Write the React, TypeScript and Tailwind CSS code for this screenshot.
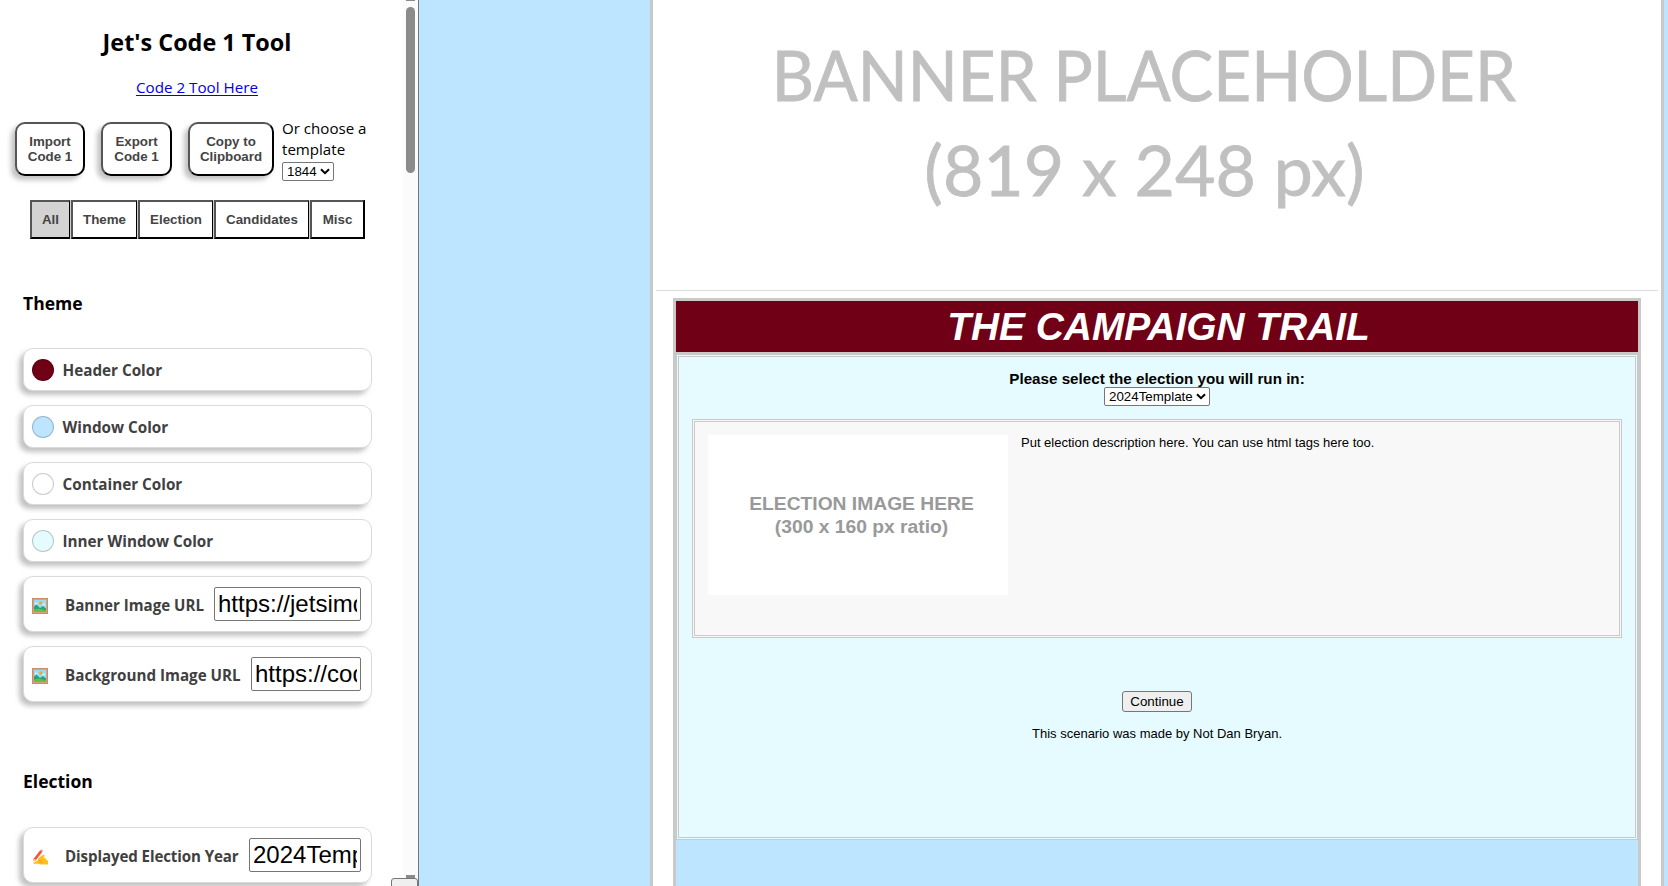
import type { ReactNode } from "react";

const segoe = "font-['Open_Sans','Noto_Sans',sans-serif]";
const arial = "font-['Liberation_Sans',Arial,sans-serif]";

function Chevron() {
  return (
    <svg width="10" height="7" viewBox="0 0 10 7" fill="none" className="shrink-0">
      <path d="M1 1.2 L5 5.2 L9 1.2" stroke="#000" strokeWidth="2" />
    </svg>
  );
}

function Select({ label, className }: { label: string; className: string }) {
  return (
    <div
      className={`flex h-[19px] items-center justify-between rounded-[2px] border border-[#767676] bg-white pl-[4px] pr-[3px] text-[13.33px] leading-none text-black ${arial} ${className}`}
    >
      <span>{label}</span>
      <Chevron />
    </div>
  );
}

function ActionButton({ lines, className }: { lines: [string, string]; className: string }) {
  return (
    <button
      className={`h-[54px] rounded-[10px] border-2 border-b-black border-l-[#555] border-r-black border-t-[#555] bg-white text-center text-[13.33px] font-bold leading-[15px] text-[#444] shadow-[-4px_4px_5px_rgba(0,0,0,0.24)] ${arial} ${className}`}
    >
      {lines[0]}
      <br />
      {lines[1]}
    </button>
  );
}

function Tab({ label, className }: { label: string; className: string }) {
  return (
    <button
      className={`h-[39px] border-b-2 border-l-2 border-r border-t-2 border-b-black border-l-[#555] border-r-black border-t-[#555] text-[13.33px] font-bold leading-none text-[#444] ${arial} ${className}`}
    >
      {label}
    </button>
  );
}

function Card({ children, className }: { children: ReactNode; className: string }) {
  return (
    <div
      className={`flex w-[349px] items-center rounded-[10px] border border-[#dadada] bg-white shadow-[-4px_4px_5px_rgba(0,0,0,0.24)] ${className}`}
    >
      {children}
    </div>
  );
}

function ColorRow({ label, swatch }: { label: string; swatch: string }) {
  return (
    <Card className="h-[43px] pl-[8px]">
      <span className={`size-[22px] rounded-full border border-black/20 ${swatch}`} />
      <span className="ml-[8.5px] text-[15.25px] font-bold leading-[22px] text-[#404040]">{label}</span>
    </Card>
  );
}

function FieldRow({
  icon,
  label,
  value,
  labelClass,
  fieldClass,
}: {
  icon: ReactNode;
  label: string;
  value: string;
  labelClass: string;
  fieldClass: string;
}) {
  return (
    <Card className="h-[56px] pl-[8px] pr-[10px]">
      <span className="mt-[3px] flex size-[16px] shrink-0 items-center justify-center">{icon}</span>
      <span
        className={`ml-[17px] mt-[1px] shrink-0 whitespace-nowrap font-bold leading-[22px] text-[#404040] ${labelClass}`}
      >
        {label}
      </span>
      <div className={`ml-auto shrink-0 rounded-[2px] border border-[#767676] bg-white px-[3px] ${fieldClass}`}>
        <div className={`h-[32px] overflow-hidden whitespace-nowrap text-[24px] leading-[31px] text-black ${arial}`}>
          {value}
        </div>
      </div>
    </Card>
  );
}

function PictureIcon() {
  return (
    <svg width="16" height="16" viewBox="0 0 16 16">
      <rect width="16" height="16" fill="#c98d6b" />
      <rect x="1" y="1" width="14" height="14" fill="#e0a27c" />
      <rect x="2" y="2" width="12" height="12" fill="#97dcf5" />
      <path d="M3 5.5h2.4M10.5 6.5h2.5" stroke="#e3f6fd" strokeWidth="1.4" />
      <circle cx="8.7" cy="4.9" r="1.6" fill="#f8a61c" />
      <path d="M2 8.5 L4.5 6.5 L8 10 L11 8 L14 10.5 V14 H2Z" fill="#2ba07c" />
      <path d="M2 11.5 Q7 9.5 14 12.5 V14 H2Z" fill="#5cc63c" />
    </svg>
  );
}

function WritingIcon() {
  return (
    <svg width="16" height="16" viewBox="0 0 16 16">
      <path
        d="M1.2 14.8 Q0.6 13.4 2.6 13 L5.4 11.4 Q6.2 8.2 8.6 7.4 L11.6 5.4 Q13 5.4 12.6 7 L11.6 8.4 Q13.4 8.8 14.4 10.6 L16 12 V15.6 H9.4 Q7.6 15.6 6.6 14.8 Z"
        fill="#fcc21b"
      />
      <path d="M7 11.6 H10.2 M7.6 13.4 H10.4" stroke="#f09a1a" strokeWidth="0.8" strokeLinecap="round" />
      <path d="M8.2 1.2 L10.4 2.8 L4 11 L1.4 12.2 L1.8 9.4 Z" fill="#f4553a" />
      <path d="M1.8 9.4 L4 11 L1.4 12.2 Z" fill="#f7c59a" />
      <path d="M8.2 1.2 Q9 0 10.2 0.8 Q11.2 1.6 10.4 2.8 Z" fill="#f9829b" />
    </svg>
  );
}

function Sidebar() {
  return (
    <aside
      className={`relative h-full w-[419px] shrink-0 overflow-hidden border-r border-[#767676] bg-white text-black ${segoe}`}
    >
      <div className="flex w-[394px] flex-col">
        <h1 className="mt-[26px] text-center text-[23.4px] font-bold leading-[32px]">Jet's Code 1 Tool</h1>
        <a className="mt-[18px] text-center text-[15.2px] leading-[22px] text-[#0000ee] underline underline-offset-2">
          Code 2 Tool Here
        </a>
        <div className="mt-[20px] flex h-[82px] items-start pl-[15px]">
          <ActionButton lines={["Import", "Code 1"]} className="mt-[4px] w-[70px]" />
          <ActionButton lines={["Export", "Code 1"]} className="ml-[16px] mt-[4px] w-[71px]" />
          <ActionButton lines={["Copy to", "Clipboard"]} className="ml-[16px] mt-[4px] w-[86px]" />
          <div className="ml-[8px] text-[15.1px] leading-[21px]">
            Or choose a
            <br />
            template
            <Select label="1844" className="mt-[2px] w-[52px]" />
          </div>
        </div>
        <div className="ml-[30px] flex w-[335px] gap-px border-r border-black bg-[#cfcfcf]">
          <Tab label="All" className="w-[40px] bg-[#d3d3d3]" />
          <Tab label="Theme" className="w-[66px] bg-white" />
          <Tab label="Election" className="w-[75px] bg-white" />
          <Tab label="Candidates" className="w-[95px] bg-white" />
          <Tab label="Misc" className="w-[54px] bg-white" />
        </div>
        <section className="mt-[52px] pl-[23px]">
          <h2 className="text-[17.5px] font-bold leading-[24px]">Theme</h2>
          <div className="mt-[33px] flex flex-col gap-[14px]">
            <ColorRow label="Header Color" swatch="bg-[#700016]" />
            <ColorRow label="Window Color" swatch="bg-[#bde5ff]" />
            <ColorRow label="Container Color" swatch="bg-white" />
            <ColorRow label="Inner Window Color" swatch="bg-[#e6fbff]" />
            <FieldRow
              icon={<PictureIcon />}
              label="Banner Image URL"
              value="https://jetsimdev.com/banner.png"
              labelClass="text-[15.1px]"
              fieldClass="w-[147px]"
            />
            <FieldRow
              icon={<PictureIcon />}
              label="Background Image URL"
              value="https://codeone.com/background.png"
              labelClass="text-[15.2px]"
              fieldClass="w-[110px]"
            />
          </div>
        </section>
        <section className="mt-[67px] pl-[23px]">
          <h2 className="text-[17.5px] font-bold leading-[24px]">Election</h2>
          <div className="mt-[34px]">
            <FieldRow
              icon={<WritingIcon />}
              label="Displayed Election Year"
              value="2024Template"
              labelClass="text-[15.1px] tracking-[-0.1px]"
              fieldClass="w-[112px]"
            />
          </div>
        </section>
      </div>
      <div className="absolute right-0 top-0 flex h-full w-[15px] flex-col items-center bg-[#fbfbfb]">
        <div className="h-px w-[9px] bg-[#8b8b8b]" />
        <div className="mt-[6px] h-[166px] w-[9px] rounded-full bg-[#8b8b8b]" />
        <div className="mt-auto h-[11px] w-[9px] bg-[#8b8b8b]" />
      </div>
      <div className="absolute -bottom-[10px] right-0 h-[18px] w-[27px] rounded-[3px] border border-[#767676] bg-[#efefef]" />
    </aside>
  );
}

function Game() {
  return (
    <main className={`flex h-full min-w-0 flex-1 justify-end bg-[#bde5ff] pr-[4px] text-black ${arial}`}>
      <div className="flex h-full w-[1014px] flex-col border-x-[3px] border-[#c9c9c9] bg-white px-[3px]">
        <div className="flex h-[291px] shrink-0 flex-col items-center border-b border-[#dcdcdc] pt-[27px] font-['Lato','Carlito',sans-serif] text-[69.7px] leading-[95px] text-[#c0c0c0] [-webkit-text-stroke:0.8px_#c0c0c0]">
          <div className="-ml-[26px] origin-center scale-x-[0.94] whitespace-nowrap">BANNER PLACEHOLDER</div>
          <div className="-ml-[25px] whitespace-nowrap">(819 x 248 px)</div>
        </div>
        <div className="mx-[17px] mt-[7px] flex min-h-0 flex-1 flex-col border-x-[3px] border-t-[3px] border-[#c9c9c9] bg-[#bde5ff]">
          <div className="h-[53px] shrink-0 border-b-2 border-[#c9c9c9] bg-[#700016] pl-[3px] text-center text-[38.9px] font-bold italic leading-[51px] text-white">
            THE CAMPAIGN TRAIL
          </div>
          <div className="flex h-[486px] shrink-0 flex-col items-center border-[3px] border-double border-[#c9c9c9] bg-[#e6fbff]">
            <p className="mt-[13px] text-[15.2px] font-bold leading-[17px]">Please select the election you will run in:</p>
            <Select label="2024Template" className="w-[106px]" />
            <div className="mt-[13px] flex h-[219px] w-[930px] items-start border-[3px] border-double border-[#c9c9c9] bg-[#f8f8f8] pl-[13px] pt-[13px]">
              <div className="flex h-[160px] w-[300px] flex-col items-center justify-center bg-white pl-[7px] text-[19.25px] font-bold leading-[23px] text-[#999]">
                <span>ELECTION IMAGE HERE</span>
                <span>(300 x 160 px ratio)</span>
              </div>
              <p className="ml-[13px] text-[13px] leading-[15px]">
                Put election description here. You can use html tags here too.
              </p>
            </div>
            <button className="mt-[53px] h-[21px] w-[70px] rounded-[3px] border border-[#767676] bg-[#efefef] text-[13.33px] leading-none">
              Continue
            </button>
            <p className="mt-[14px] text-[13px] leading-[15px]">This scenario was made by Not Dan Bryan.</p>
          </div>
        </div>
      </div>
    </main>
  );
}

export default function App() {
  return (
    <div className="flex h-[886px] w-[1668px] overflow-hidden">
      <Sidebar />
      <Game />
    </div>
  );
}
